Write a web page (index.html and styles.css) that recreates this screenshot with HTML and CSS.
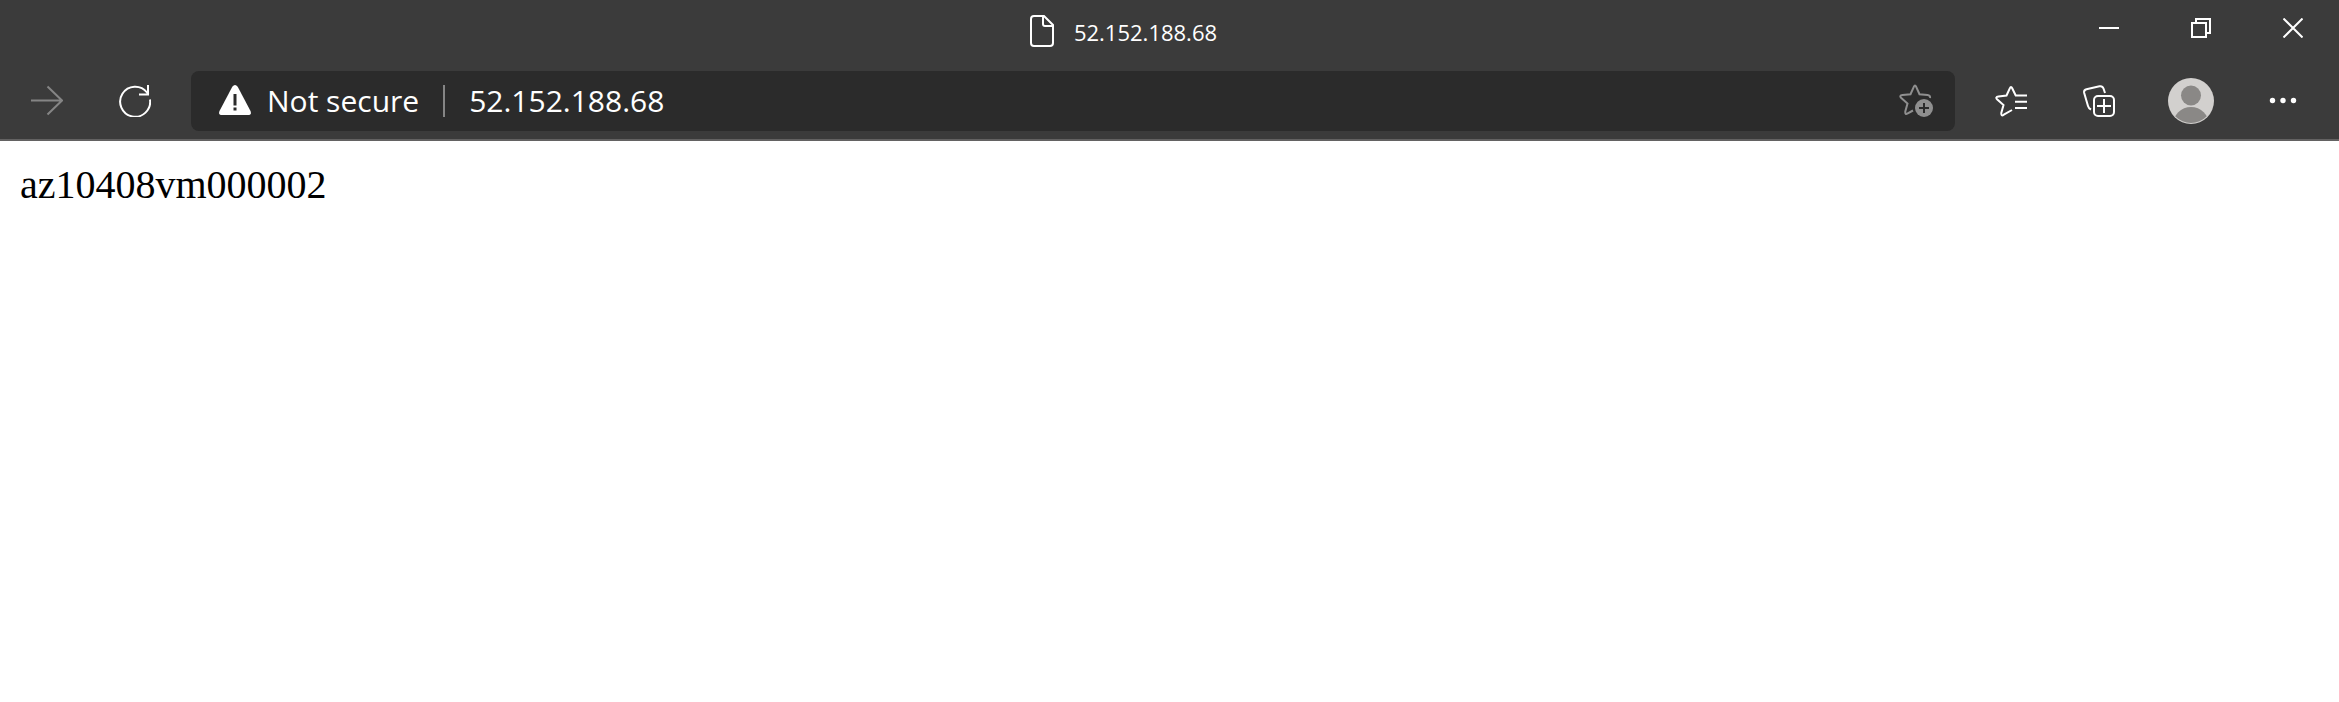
FILE: index.html
```html
<!DOCTYPE html>
<html lang="en">
<head>
<meta charset="utf-8">
<title>52.152.188.68</title>
<link rel="stylesheet" href="styles.css">
</head>
<body>
<header class="browser">
  <div class="titlebar">
    <div class="tab">
      <svg class="tab-icon" viewBox="0 0 24 32" aria-hidden="true"><path d="M4 1H14L23 10V28Q23 31 20 31H4Q1 31 1 28V4Q1 1 4 1ZM13 1V9Q13 11 15 11H23"/></svg>
      <span class="tab-title">52.152.188.68</span>
    </div>
    <div class="window-controls">
      <button class="window-button" type="button" aria-label="Minimize"><svg class="window-icon" viewBox="0 0 20 20"><path d="M0 10H20"/></svg></button>
      <button class="window-button" type="button" aria-label="Restore"><svg class="window-icon" viewBox="0 0 20 20"><path d="M1 5H15V19H1ZM5 5V1H19V15H15"/></svg></button>
      <button class="window-button" type="button" aria-label="Close"><svg class="window-icon" viewBox="0 0 20 20"><path d="M0.500 0.500L19.500 19.500M19.500 0.500L0.500 19.500"/></svg></button>
    </div>
  </div>
  <nav class="toolbar">
    <button class="tool" type="button" aria-label="Forward" disabled><svg class="icon" viewBox="0 0 32 32"><path d="M0 15.500H31M16.500 1.500L31 15.500L16.500 29.500"/></svg></button>
    <button class="tool" type="button" aria-label="Refresh"><svg class="icon" viewBox="0 0 32 32"><path d="M31 14.500A15 15 0 1 1 28 7.500L29.500 9.500M29 0V9.500H20"/></svg></button>
    <div class="omnibox">
      <button class="security" type="button">
        <svg class="icon" viewBox="0 0 32 32"><path class="solid" d="M13.300 1.700Q16 -1.700 18.700 1.700L31.500 26Q33 30 29 30H3Q-1 30 0.500 26Z"/><path class="mark" d="M16 9V20.500M16 22.500V25.500"/></svg>
        <span>Not secure</span>
      </button>
      <span class="divider"></span>
      <input class="address" type="text" value="52.152.188.68" aria-label="Address">
      <button class="add-favorite" type="button" aria-label="Add to favorites"><svg class="star-icon" viewBox="0 0 34 34"><path d="M31 14Q31.500 11.500 28.500 11L20.500 10.200L17.200 2.800Q16 0.200 14.800 2.800L11.500 10.200L3.500 11Q-0.200 11.500 2.300 14L8.500 19.500L6.300 27.500Q6 31.300 8.800 29.300L14 26.500"/><circle cx="25" cy="24" r="9"/><path class="plus" d="M25 19V29M20 24H30"/></svg></button>
    </div>
    <button class="tool" type="button" aria-label="Favorites"><svg class="icon" viewBox="0 0 32 32"><path d="M32 10.500H20.700L17.200 3.300Q16 0.700 14.800 3.300L11.500 10.500L3.500 11.500Q-0.200 12 2.300 14.500L8.500 20L6.300 28Q6 31.700 8.800 29.700L17 25M20 16.800H32M20 23H32"/></svg></button>
    <button class="tool" type="button" aria-label="Collections"><svg class="icon" viewBox="0 0 32 32"><path d="M22 8L20.500 3.500Q19.500 0.700 16.500 1.300L3.500 4.200Q0.500 5 1.200 8L5 21Q5.600 23.300 8 24.500"/><rect x="11" y="11" width="20" height="20" rx="4"/><path d="M21 14V28M14 21H28"/></svg></button>
    <button class="tool profile" type="button" aria-label="Profile"><svg class="avatar" viewBox="0 0 46 46"><clipPath id="disc"><circle cx="23" cy="23" r="22"/></clipPath><circle class="ring" cx="23" cy="23" r="23"/><g class="person" clip-path="url(#disc)"><circle cx="23" cy="17.500" r="10"/><circle cx="23" cy="47" r="18"/></g></svg></button>
    <button class="tool" type="button" aria-label="Settings and more"><svg class="icon" viewBox="0 0 32 32"><g class="solid"><circle cx="5.500" cy="15.500" r="2.700"/><circle cx="16" cy="15.500" r="2.700"/><circle cx="26.500" cy="15.500" r="2.700"/></g></svg></button>
  </nav>
</header>
<main class="page">az10408vm000002</main>
</body>
</html>
```
FILE: styles.css
```css
* {
  box-sizing: border-box;
}

body {
  margin: 0;
  background: #fff;
}

button,
input {
  margin: 0;
  padding: 0;
  border: 0;
  background: none;
  color: inherit;
  font: inherit;
}

svg {
  display: block;
  fill: none;
  stroke: currentColor;
  stroke-width: 2;
}

.browser {
  background: #3b3b3b;
  border-bottom: 2px solid #636262;
  color: #fff;
  font-family: "Open Sans", "Noto Sans", sans-serif;
}

.titlebar {
  display: flex;
  height: 64px;
}

.tab {
  flex: 1;
  display: flex;
  align-items: center;
  justify-content: center;
  gap: 20px;
  padding-left: 184px;
  padding-bottom: 2px;
}

.tab-icon {
  width: 24px;
  height: 32px;
}

.tab-title {
  padding-top: 2px;
  font-size: 22px;
  line-height: 30px;
}

.window-controls {
  display: flex;
}

.window-button {
  display: grid;
  place-items: center;
  width: 92px;
  height: 56px;
}

.window-icon {
  width: 20px;
  height: 20px;
}

.toolbar {
  display: flex;
  padding: 7px 12px 8px 3px;
}

.tool {
  display: grid;
  place-items: center;
  width: 88px;
  height: 60px;
}

.tool:disabled {
  color: #858585;
}

.profile {
  width: 96px;
}

.icon {
  width: 32px;
  height: 32px;
}

.omnibox {
  flex: 1;
  display: flex;
  align-items: center;
  height: 60px;
  margin: 0 12px;
  padding: 0 22px 0 28px;
  border-radius: 8px;
  background: #2b2b2b;
  font-size: 30px;
  line-height: 40px;
}

.security {
  display: flex;
  align-items: center;
  gap: 16px;
}

.solid {
  fill: currentColor;
  stroke: none;
}

.mark {
  stroke: #2b2b2b;
  stroke-width: 3;
}

.divider {
  width: 2px;
  height: 32px;
  margin: 0 24px;
  background: #858585;
}

.address {
  flex: 1;
  min-width: 0;
  outline: 0;
}

.add-favorite {
  color: #8f8f8f;
}

.star-icon {
  width: 34px;
  height: 34px;
}

.star-icon circle {
  fill: currentColor;
  stroke: none;
}

.plus {
  stroke: #2b2b2b;
}

.avatar {
  width: 46px;
  height: 46px;
  stroke: none;
}

.ring {
  fill: #d2d0ce;
}

.person {
  fill: #8a8886;
}

.page {
  padding: 20px;
  font-family: "Liberation Serif", serif;
  font-size: 40px;
  line-height: 48px;
}
```
